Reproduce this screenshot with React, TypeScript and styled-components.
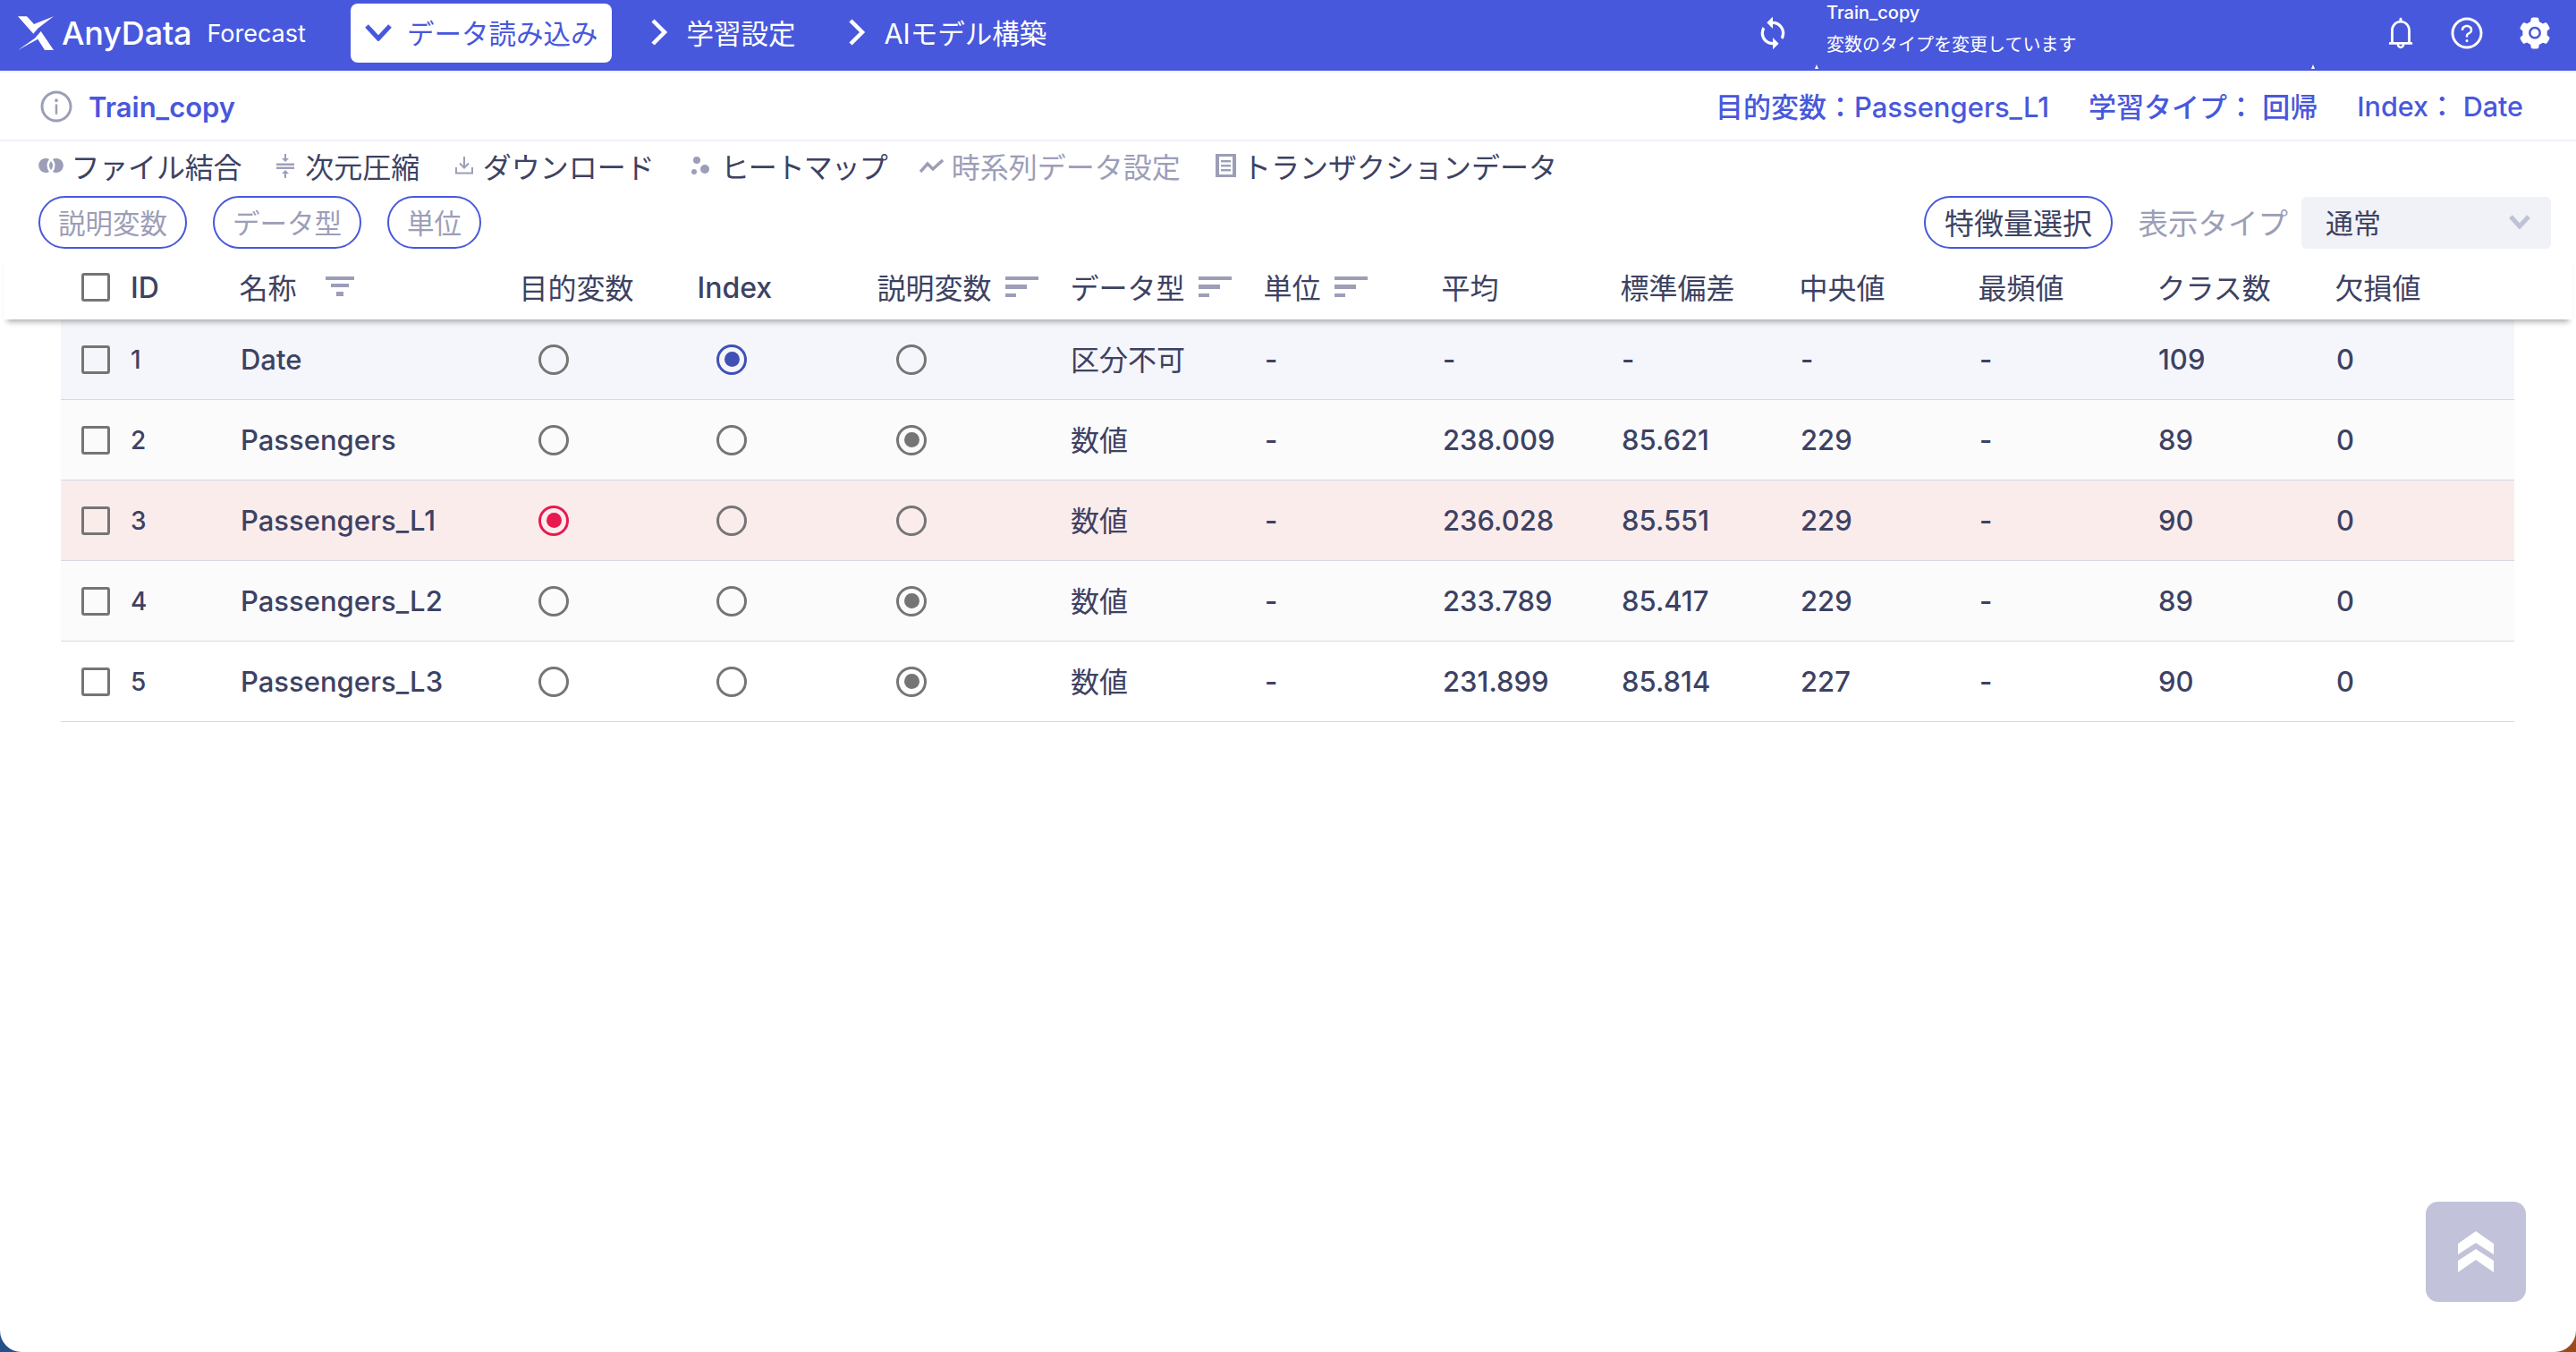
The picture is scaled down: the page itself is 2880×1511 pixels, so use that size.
import React from "react";
import styled, { createGlobalStyle } from "styled-components";
import { MdSync } from "react-icons/md";
import { AiFillSetting, AiOutlineBell, AiOutlineInfoCircle, AiOutlineQuestionCircle } from "react-icons/ai";

const FONT = `Inter, "Noto Sans CJK JP", sans-serif`;
const BLUE = "#4858dc";
const INK = "#3d4263";
const MUTED = "#9c9eb8";

const GlobalStyle = createGlobalStyle`
  html, body {
    margin: 0;
    padding: 0;
    height: 100%;
    background: linear-gradient(90deg, #24508a 0%, #24508a 50%, #9c4a1c 50%, #9c4a1c 100%);
  }
  body {
    font-family: ${FONT};
    color: ${INK};
    overflow: hidden;
  }
`;

const Shell = styled.div`
  height: 100vh;
  background: #fff;
  border-radius: 0 0 24px 24px;
  overflow: hidden;
  position: relative;
`;

const TopBar = styled.header`
  height: 81px;
  box-sizing: border-box;
  background: ${BLUE};
  display: flex;
  align-items: center;
  padding: 0 26px 5px 20px;
  color: #fff;
  border-bottom: 2px solid #f1f2f8;
`;

const Brand = styled.div`
  display: flex;
  align-items: center;
  width: 372px;
  flex: none;
`;

const BrandName = styled.span`
  font-size: 36px;
  font-weight: 500;
  margin-left: 9px;
  letter-spacing: -0.2px;
`;

const BrandProduct = styled.span`
  font-size: 27px;
  margin-left: 17px;
`;

const NavTab = styled.div<{ $active?: boolean }>`
  height: 66px;
  box-sizing: border-box;
  display: flex;
  align-items: center;
  gap: ${(p) => (p.$active ? 17 : 18)}px;
  padding: 0 15px 2px 16px;
  margin-right: 24px;
  border-radius: 8px;
  font-size: 30.5px;
  white-space: nowrap;
  background: ${(p) => (p.$active ? "#fff" : "transparent")};
  color: ${(p) => (p.$active ? BLUE : "#fff")};
`;

const Status = styled.div`
  margin-left: auto;
  display: flex;
  align-items: center;
  width: 892px;
  font-size: 20px;
  align-self: stretch;
`;

const StatusIcon = styled.div`
  width: 67px;
  flex: none;
  display: flex;
  font-size: 40px;
`;

const StatusText = styled.div`
  position: relative;
  display: flex;
  flex-direction: column;
  align-self: flex-start;
  gap: 12px;
  line-height: 24px;
  padding: 2px 0 0 13px;
  width: 559px;
  height: 77px;
  box-sizing: border-box;

  &::before,
  &::after {
    content: "";
    position: absolute;
    bottom: 0;
    width: 4px;
    height: 5px;
    background: #fff;
    clip-path: polygon(0 100%, 50% 0, 100% 100%);
  }

  &::before {
    left: 0;
  }

  &::after {
    right: 0;
  }
`;

const StatusTitle = styled.span`
  font-weight: 500;
`;

const TopIcons = styled.div`
  display: flex;
  align-items: center;
  gap: 34.5px;
  font-size: 40px;
  margin-left: auto;

  svg {
    display: block;
  }

  svg:last-child {
    margin-left: 1.5px;
  }
`;

const InfoBar = styled.div`
  height: 75px;
  display: flex;
  align-items: center;
  padding: 0 59px 0 43px;
  border-bottom: 2px solid #f1f2f8;
  color: ${BLUE};
`;

const InfoIcon = styled.span`
  display: flex;
  color: ${MUTED};
  font-size: 40px;
  margin-right: 16px;
`;

const DatasetName = styled.span`
  font-size: 31px;
  font-weight: 600;
  margin-top: 2px;
`;

const Summary = styled.div`
  margin-left: auto;
  display: flex;
  gap: 44px;
  padding-bottom: 2px;
  font-size: 31px;
  font-weight: 500;
`;

const SummaryIndex = styled.span`
  font-size: 30.5px;
`;

const Toolbar = styled.div`
  height: 60px;
  box-sizing: border-box;
  display: flex;
  align-items: center;
  padding: 0 0 6px 43px;
`;

const ToolItem = styled.div<{ $muted?: boolean; $gap: number; $iconGap: number; $tracking?: number }>`
  display: flex;
  align-items: center;
  gap: ${(p) => p.$iconGap}px;
  margin-right: ${(p) => p.$gap}px;
  font-size: 32px;
  letter-spacing: ${(p) => p.$tracking ?? 0}px;
  white-space: nowrap;
  color: ${(p) => (p.$muted ? MUTED : INK)};

  svg {
    display: block;
    flex: none;
  }
`;

const ControlRow = styled.div`
  height: 60px;
  display: flex;
  align-items: center;
  padding: 0 28px 0 43px;
  gap: 29px;
`;

const Chip = styled.div<{ $dark?: boolean }>`
  height: 59px;
  box-sizing: border-box;
  display: flex;
  align-items: center;
  padding: 0 ${(p) => (p.$dark ? 21 : 20)}px;
  border: 2px solid ${BLUE};
  border-radius: 30px;
  font-size: ${(p) => (p.$dark ? 33 : 30.5)}px;
  white-space: nowrap;
  color: ${(p) => (p.$dark ? INK : MUTED)};
`;

const ControlRight = styled.div`
  margin-left: auto;
  display: flex;
  align-items: center;
`;

const TypeLabel = styled.span`
  font-size: 33.5px;
  color: ${MUTED};
  margin: 0 15px 2px 28.5px;
  white-space: nowrap;
`;

const Select = styled.div`
  width: 279px;
  height: 58px;
  box-sizing: border-box;
  display: flex;
  align-items: center;
  justify-content: space-between;
  padding: 0 23px 3px 27px;
  background: #f1f2f7;
  border-radius: 6px;
  font-size: 31px;
  margin-top: 2px;
`;

const columns = "55px 123px 313px 199px 201px 216px 216px 199px 200px 200px 200px 200px 199px 199px";

const HeadRow = styled.div`
  margin: 7px 4px 0;
  height: 72px;
  display: grid;
  grid-template-columns: ${columns};
  align-items: center;
  padding-left: 87px;
  background: #fff;
  box-shadow: 0 7px 6px -4px rgba(0, 0, 0, 0.3);
  position: relative;
  white-space: nowrap;
`;

const HeadCell = styled.div<{ $gap?: number }>`
  display: flex;
  align-items: center;
  gap: ${(p) => p.$gap ?? 15}px;
  font-size: 32px;
  margin-left: -1.5px;
  padding-bottom: 2px;
`;

const LatinHeadCell = styled(HeadCell)`
  font-weight: 500;
  padding-bottom: 0;
`;

const IdHeadCell = styled(LatinHeadCell)`
  margin-left: 0;
`;

const Rows = styled.div`
  margin-left: 68px;
  width: 2743px;
`;

const Row = styled.div<{ $bg: string }>`
  height: 89px;
  display: grid;
  grid-template-columns: ${columns};
  align-items: center;
  padding-left: 23px;
  background: ${(p) => p.$bg};
  border-bottom: 1px solid #d5d9e2;
  font-size: 31px;
  font-weight: 500;
`;

const RowId = styled.div`
  font-size: 28px;
`;

const Kanji = styled.div`
  font-size: 32px;
  font-weight: 400;
  margin: 0 0 3px -1px;
`;

const Box = styled.span`
  display: block;
  width: 32px;
  height: 32px;
  box-sizing: border-box;
  border: 3px solid #757575;
  border-radius: 3px;
`;

const Radio = styled.span<{ $on?: string }>`
  display: flex;
  align-items: center;
  justify-content: center;
  width: 34px;
  height: 34px;
  margin-left: 20px;
  box-sizing: border-box;
  border: 3px solid ${(p) => p.$on ?? "#757575"};
  border-radius: 50%;

  &::after {
    content: "";
    display: ${(p) => (p.$on ? "block" : "none")};
    width: 17px;
    height: 17px;
    border-radius: 50%;
    background: ${(p) => p.$on};
  }
`;

const ScrollTop = styled.div`
  position: absolute;
  right: 56px;
  bottom: 56px;
  width: 112px;
  height: 112px;
  border-radius: 14px;
  background: #c2c3da;
  display: flex;
  align-items: center;
  justify-content: center;
`;

const Logo = () => (
  <svg width="40" height="40" viewBox="0 0 40 40" fill="#fff">
    <path d="M0 1.3 L10 1.3 L18 10 L40 1.3 L22.3 14.7 L17.3 20.7Z" />
    <path d="M0 39 L19 25.7 L25.7 18 L40 39 L30 39 L22.3 26.7Z" />
  </svg>
);

const NavChevron = () => (
  <svg width="30" height="20" viewBox="0 0 30 20" fill="none" stroke="currentColor" strokeWidth="5">
    <path d="M2 3 L15 17 L28 3" />
  </svg>
);

const SideChevron = () => (
  <svg width="26" height="30" viewBox="0 0 26 30" fill="none" stroke="currentColor" strokeWidth="4.5">
    <path d="M6 2 L19 15 L6 28" />
  </svg>
);

const SelectChevron = () => (
  <svg width="24" height="16" viewBox="0 0 24 16" fill="none" stroke="#bfc1d6" strokeWidth="5">
    <path d="M2 2 L12 13 L22 2" />
  </svg>
);

const FilterIcon = () => (
  <svg width="32" height="22" viewBox="0 0 32 22" fill={MUTED}>
    <rect x="0" y="0" width="32" height="4" />
    <rect x="6" y="8" width="20" height="4" />
    <rect x="12" y="17" width="8" height="5" />
  </svg>
);

const SortIcon = () => (
  <svg width="37" height="23" viewBox="0 0 37 23" fill={MUTED}>
    <rect x="0" y="0" width="37" height="4" />
    <rect x="0" y="9" width="24" height="5" />
    <rect x="0" y="19" width="12" height="4" />
  </svg>
);

const VennIcon = () => (
  <svg width="28" height="16" viewBox="0 0 28 16" fill={MUTED}>
    <path d="M9 0 A8 8 0 0 1 12 1 Q7 8 12 15 A8 8 0 1 1 9 0Z" />
    <path d="M19 0 A8 8 0 0 0 16 1 Q21 8 16 15 A8 8 0 1 0 19 0Z" />
    <path d="M14 3 Q18 8 14 13 Q10 8 14 3Z" />
  </svg>
);

const CompressIcon = () => (
  <svg width="20" height="27" viewBox="0 0 20 27" fill={MUTED} stroke={MUTED}>
    <rect x="0" y="11" width="20" height="1.4" />
    <rect x="0" y="15" width="20" height="1.4" />
    <path d="M10 0 V8" strokeWidth="2" fill="none" />
    <path d="M6 5 L10 9 L14 5Z" stroke="none" />
    <path d="M10 19 V27" strokeWidth="2" fill="none" />
    <path d="M6 22 L10 18 L14 22Z" stroke="none" />
  </svg>
);

const DownloadIcon = () => (
  <svg width="20" height="20" viewBox="0 0 20 20" fill="none" stroke={MUTED} strokeWidth="2">
    <path d="M10 0 V12 M5 7.5 L10 12.5 L15 7.5" />
    <path d="M1 12 V18.5 H19 V12" />
  </svg>
);

const DotsIcon = () => (
  <svg width="20" height="21" viewBox="0 0 20 21" fill={MUTED}>
    <circle cx="6" cy="4" r="4" />
    <circle cx="3" cy="17" r="3" />
    <circle cx="15" cy="14" r="5" />
  </svg>
);

const TrendIcon = () => (
  <svg width="27" height="15" viewBox="0 0 27 15" fill="none" stroke={MUTED} strokeWidth="3.4">
    <path d="M1 14 L9 5 L15 11 L26 1" />
  </svg>
);

const ReceiptIcon = () => (
  <svg width="23" height="26" viewBox="0 0 23 26" fill={MUTED}>
    <path d="M0 0 H23 V26 H0Z M4 3 V23 H19 V3Z" fillRule="evenodd" />
    <rect x="6" y="7" width="11" height="2.4" />
    <rect x="6" y="12" width="11" height="2.4" />
    <rect x="6" y="17" width="11" height="2.4" />
  </svg>
);

const UpIcon = () => (
  <svg width="40" height="47" viewBox="0 0 40 47" fill="#fff">
    <path d="M20 0 L40 14 V26 L20 13 L0 26 V14Z" />
    <path d="M20 20 L40 33 V46 L20 32 L0 46 V33Z" />
  </svg>
);

const tools = [
  { label: "ファイル結合", icon: <VennIcon />, gap: 38.5, iconGap: 8.5, tracking: -0.2 },
  { label: "次元圧縮", icon: <CompressIcon />, gap: 39.5, iconGap: 12.5 },
  { label: "ダウンロード", icon: <DownloadIcon />, gap: 41, iconGap: 11 },
  { label: "ヒートマップ", icon: <DotsIcon />, gap: 36, iconGap: 13, tracking: -1 },
  { label: "時系列データ設定", icon: <TrendIcon />, gap: 39, iconGap: 9, muted: true },
  { label: "トランザクションデータ", icon: <ReceiptIcon />, gap: 0, iconGap: 7 },
];

type Variable = {
  id: number;
  name: string;
  pick: "target" | "index" | "feature";
  kind: string;
  mean: string;
  std: string;
  median: string;
  classes: number;
  bg: string;
};

const variables: Variable[] = [
  { id: 1, name: "Date", pick: "index", kind: "区分不可", mean: "-", std: "-", median: "-", classes: 109, bg: "#f5f6fb" },
  { id: 2, name: "Passengers", pick: "feature", kind: "数値", mean: "238.009", std: "85.621", median: "229", classes: 89, bg: "#fbfbfc" },
  { id: 3, name: "Passengers_L1", pick: "target", kind: "数値", mean: "236.028", std: "85.551", median: "229", classes: 90, bg: "#fbecec" },
  { id: 4, name: "Passengers_L2", pick: "feature", kind: "数値", mean: "233.789", std: "85.417", median: "229", classes: 89, bg: "#fbfbfc" },
  { id: 5, name: "Passengers_L3", pick: "feature", kind: "数値", mean: "231.899", std: "85.814", median: "227", classes: 90, bg: "#ffffff" },
];

export default function App() {
  return (
    <Shell>
      <GlobalStyle />
      <TopBar>
        <Brand>
          <Logo />
          <BrandName>AnyData</BrandName>
          <BrandProduct>Forecast</BrandProduct>
        </Brand>
        <NavTab $active>
          <NavChevron />
          データ読み込み
        </NavTab>
        <NavTab>
          <SideChevron />
          学習設定
        </NavTab>
        <NavTab>
          <SideChevron />
          AIモデル構築
        </NavTab>
        <Status>
          <StatusIcon>
            <MdSync />
          </StatusIcon>
          <StatusText>
            <StatusTitle>Train_copy</StatusTitle>
            <span>変数のタイプを変更しています</span>
          </StatusText>
          <TopIcons>
            <AiOutlineBell />
            <AiOutlineQuestionCircle />
            <AiFillSetting />
          </TopIcons>
        </Status>
      </TopBar>

      <InfoBar>
        <InfoIcon>
          <AiOutlineInfoCircle />
        </InfoIcon>
        <DatasetName>Train_copy</DatasetName>
        <Summary>
          <span>目的変数：Passengers_L1</span>
          <span>学習タイプ： 回帰</span>
          <SummaryIndex>Index： Date</SummaryIndex>
        </Summary>
      </InfoBar>

      <Toolbar>
        {tools.map((tool) => (
          <ToolItem key={tool.label} $muted={tool.muted} $gap={tool.gap} $iconGap={tool.iconGap} $tracking={tool.tracking}>
            {tool.icon}
            {tool.label}
          </ToolItem>
        ))}
      </Toolbar>

      <ControlRow>
        <Chip>説明変数</Chip>
        <Chip>データ型</Chip>
        <Chip>単位</Chip>
        <ControlRight>
          <Chip $dark>特徴量選択</Chip>
          <TypeLabel>表示タイプ</TypeLabel>
          <Select>
            通常
            <SelectChevron />
          </Select>
        </ControlRight>
      </ControlRow>

      <HeadRow>
        <Box />
        <IdHeadCell>ID</IdHeadCell>
        <HeadCell $gap={32}>
          名称
          <FilterIcon />
        </HeadCell>
        <HeadCell>目的変数</HeadCell>
        <LatinHeadCell>Index</LatinHeadCell>
        <HeadCell>
          説明変数
          <SortIcon />
        </HeadCell>
        <HeadCell>
          データ型
          <SortIcon />
        </HeadCell>
        <HeadCell>
          単位
          <SortIcon />
        </HeadCell>
        <HeadCell>平均</HeadCell>
        <HeadCell>標準偏差</HeadCell>
        <HeadCell>中央値</HeadCell>
        <HeadCell>最頻値</HeadCell>
        <HeadCell>クラス数</HeadCell>
        <HeadCell>欠損値</HeadCell>
      </HeadRow>

      <Rows>
        {variables.map((v) => (
          <Row key={v.id} $bg={v.bg}>
            <Box />
            <RowId>{v.id}</RowId>
            <div>{v.name}</div>
            <Radio $on={v.pick === "target" ? "#e8194f" : undefined} />
            <Radio $on={v.pick === "index" ? "#3f51b5" : undefined} />
            <Radio $on={v.pick === "feature" ? "#757575" : undefined} />
            <Kanji>{v.kind}</Kanji>
            <div>-</div>
            <div>{v.mean}</div>
            <div>{v.std}</div>
            <div>{v.median}</div>
            <div>-</div>
            <div>{v.classes}</div>
            <div>0</div>
          </Row>
        ))}
      </Rows>

      <ScrollTop>
        <UpIcon />
      </ScrollTop>
    </Shell>
  );
}
